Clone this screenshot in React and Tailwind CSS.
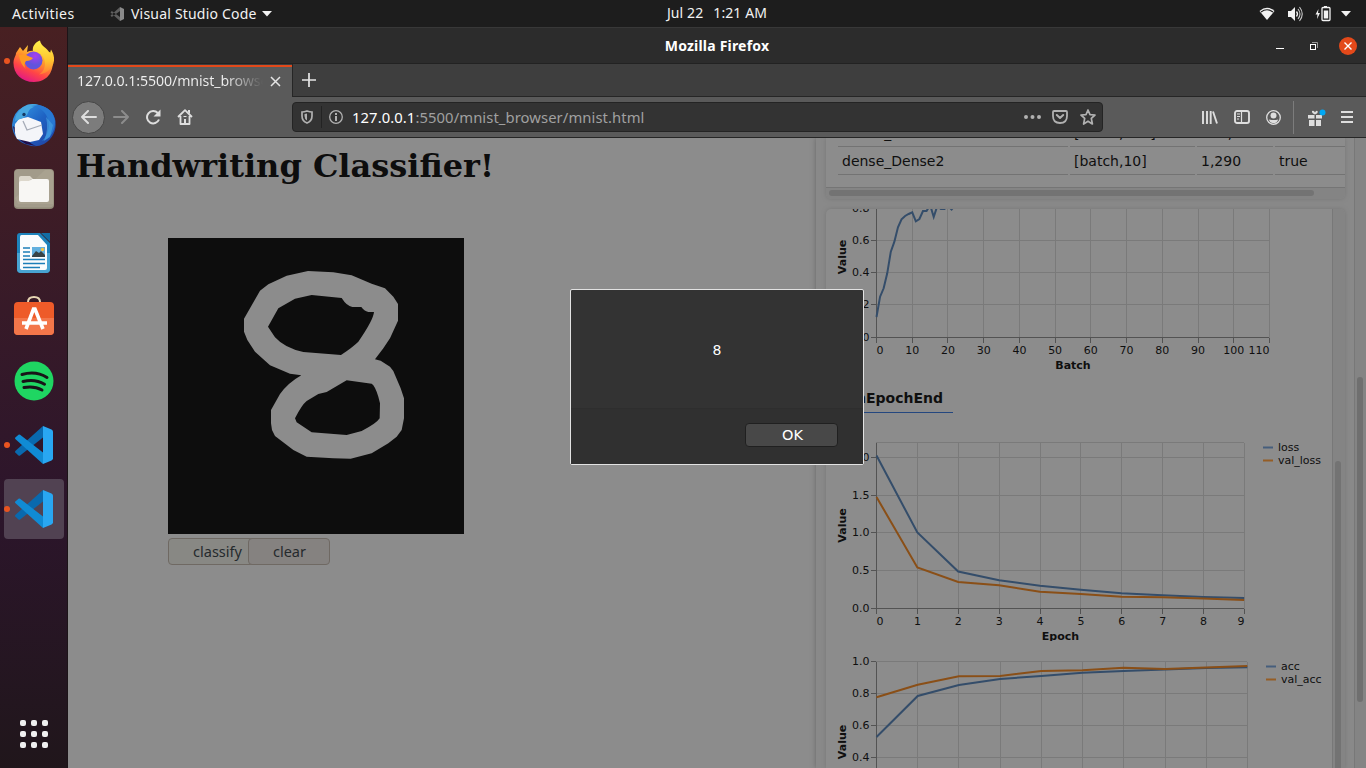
import React from "react";

const UI = "font-['Noto_Sans',sans-serif]";
const DJ = "font-['DejaVu_Sans',sans-serif]";

function TopBar() {
  return (
    <header className={`${UI} h-[27px] shrink-0 bg-[#1d1d1d] text-[#f2f2f2] text-[14px] leading-[27px] grid grid-cols-3`}>
      <div className="flex items-center">
        <span className="pl-3 w-[109px] tracking-[0.42px]">Activities</span>
        <svg width="16" height="16" viewBox="0 0 16 16" className="mr-[6px]">
          <path d="M11 1v14L15 13V3z" fill="#8a8a8a" />
          <path d="M11 1L1.500 9.500 2.800 11 11 5zM11 15L1.500 6.500 2.800 5 11 11z" fill="#5e5e5e" />
        </svg>
        <span className="tracking-[0.2px]">Visual Studio Code</span>
        <svg width="10" height="6" viewBox="0 0 10 6" className="ml-[5px]"><path d="M0 0h10L5 5.500z" fill="#f2f2f2" /></svg>
      </div>
      <div className="flex justify-center gap-[10px] pl-[68px] whitespace-nowrap tracking-[0.1px] leading-[26px]">
        <span>Jul 22</span><span>1:21 AM</span>
      </div>
      <div className="flex items-center justify-end pr-[15px]">
        <svg width="16" height="14" viewBox="0 0 16 14" className="mr-[12px]">
          <path d="M.5 4Q8-2.500 15.500 4L8 13z" fill="#f2f2f2" />
          <path d="M2 5Q8 .6 14 5" fill="none" stroke="#1d1d1d" strokeWidth="1.100" />
        </svg>
        <svg width="17" height="16" viewBox="0 0 17 16" className="mr-[11px]">
          <path d="M1 5h3l4-4v14l-4-4H1z" fill="#f2f2f2" />
          <path d="M9.500 5.500q2 2.500 0 5" fill="none" stroke="#f2f2f2" strokeWidth="1.300" />
          <path d="M11 3q4 5 0 10M12.500 1q5.500 7 0 14" fill="none" stroke="#c8c8c8" strokeWidth="1.100" />
        </svg>
        <svg width="16" height="17" viewBox="0 0 16 17" className="mr-[10px]">
          <path d="M3.500 4L.5 9.500h2L2 14l3-6H3z" fill="#f2f2f2" />
          <path d="M9 1h3v1H9z" fill="#f2f2f2" />
          <rect x="7" y="2.500" width="8" height="13" rx="1" fill="none" stroke="#f2f2f2" strokeWidth="1.300" />
          <path d="M8.800 5.500h4.400V13.500H8.800z" fill="#f2f2f2" />
        </svg>
        <svg width="10" height="6" viewBox="0 0 10 6"><path d="M0 0h10L5 5.500z" fill="#f2f2f2" /></svg>
      </div>
    </header>
  );
}

function FirefoxIcon() {
  return (
    <svg width="42" height="42" viewBox="0 0 42 42">
      <defs>
        <linearGradient id="ff1" x1=".8" y1="0" x2=".3" y2="1">
          <stop offset="0" stopColor="#fff04a" /><stop offset=".4" stopColor="#ff9a2b" /><stop offset=".7" stopColor="#ff4646" /><stop offset="1" stopColor="#e0158a" />
        </linearGradient>
        <linearGradient id="ff2" x1="0" y1="0" x2="0" y2="1"><stop offset="0" stopColor="#fff14a" /><stop offset=".6" stopColor="#ffc22f" /><stop offset="1" stopColor="#ff7a35" /></linearGradient>
        <radialGradient id="ff3" cx=".6" cy=".25"><stop offset="0" stopColor="#a93ef0" /><stop offset="1" stopColor="#6254dc" /></radialGradient>
      </defs>
      <path d="M3 13L7 7l3 4 5-6-1 7q4-2 8-1C29 10 33 14 37 12c6 10 3 30-16 30C8 42 0 33 .5 22 1 17 3 16 3 13z" fill="url(#ff1)" />
      <path d="M27 .5c-5 2-8 6-7 11 7 0 12 5 12 12 0 6-3 9-6 11 9-1 16-8 15-17-.5-4-2-6-3-8l-1 4c-3-6-9-7-10-13z" fill="url(#ff2)" />
      <circle cx="20.500" cy="20.500" r="9" fill="url(#ff3)" />
      <path d="M6 15q7-1 9 1l5 2q-2 3-7 3-3 4 0 8-6-5-7-14z" fill="#ff9a22" />
    </svg>
  );
}

function ThunderbirdIcon() {
  return (
    <svg width="46" height="46" viewBox="0 0 46 46">
      <defs><linearGradient id="tb" x1="0" y1="0" x2="1" y2="1"><stop offset="0" stopColor="#38a0e8" /><stop offset=".5" stopColor="#1f63c4" /><stop offset="1" stopColor="#203e9e" /></linearGradient></defs>
      <path d="M12 5Q19 0 28 3 42 6 44.500 19 46 34 33 42q-8 4-16 1Q2 39 1 23 2 10 12 5z" fill="url(#tb)" />
      <path d="M2 24q2 13 13 18l10 2q-8-3-11-10z" fill="#20104c" />
      <path d="M8 17L17 15l13 5 2 12-4 6-9 2-13-3Q3 32 4 22z" fill="#f4f5f9" />
      <path d="M12 19l4 9 15-5" fill="none" stroke="#a5abb7" strokeWidth="1.300" />
      <path d="M12 5Q19 0 28 3 18 5 16 13l-4 3-8 3q0-8 8-14z" fill="#48a8e0" />
      <path d="M20 4q17 2 18 20-1 9-7 15 13-4 13-20Q42 6 28 3z" fill="#2878d2" />
      <path d="M35 15l7 8-3 12-6 4q5-12 2-24z" fill="#49a7e4" opacity=".6" />
      <circle cx="13" cy="12.500" r="1.700" fill="#163963" />
    </svg>
  );
}

function FilesIcon() {
  return (
    <svg width="42" height="42" viewBox="0 0 42 42">
      <rect x="1" y="1" width="40" height="40" rx="4" fill="#918a78" /><rect x="1.500" y="1.500" width="39" height="38" rx="4" fill="#a29b8a" />
      <path d="M2 30L32 2h6q2 1 2 4v30H5z" fill="#aea795" opacity=".6" />
      <path d="M6 10q0-2 2-2h9l3 3h-2l-2 4H6z" fill="#ddd8cc" />
      <path d="M6 15q0-2 2-2h8l3-2h15q2 0 2 2v19q0 2-2 2H8q-2 0-2-2z" fill="#f8f7f4" />
    </svg>
  );
}

function WriterIcon() {
  return (
    <svg width="36" height="42" viewBox="0 0 36 42">
      <path d="M4 1h20l10 10v26q0 4-4 4H5q-4 0-4-4V4q0-3 3-3z" fill="#1d83bc" />
      <path d="M1 21h33v16q0 4-4 4H5q-4 0-4-4z" fill="#48a4d2" />
      <path d="M5.500 3H22l9 10v23q0 2-2 2H7q-3 0-3-2V5q0-2 1.500-2z" fill="#fafcfd" />
      <path d="M25 1h9v9z" fill="#126da4" />
      <path d="M7 16h7M7 20h7M7 24h7M7 27.500h22M7 31.500h22M7 35.500h17" stroke="#1c7eb8" strokeWidth="1.700" />
      <path d="M16 15h13v10H16z" fill="#62b0df" /><path d="M16 24l4-5 3 2 2-2 4 4v2H16z" fill="#374346" /><circle cx="26.500" cy="17.500" r="1.700" fill="#f7c443" />
    </svg>
  );
}

function SoftwareIcon() {
  return (
    <svg width="42" height="42" viewBox="0 0 42 42" className="-mt-[3px]">
      <path d="M15 9V7q0-5 6-5t6 5v2" fill="none" stroke="#e7d5b3" strokeWidth="2" />
      <rect x="1" y="7" width="40" height="33" rx="4" fill="#ee5b29" /><path d="M1 23h40v13q0 4-4 4H5q-4 0-4-4z" fill="#f3764a" />
      <path d="M13 34L20.500 14h1.500l8 20M9 28h25" fill="none" stroke="#fff" strokeWidth="3.600" />
    </svg>
  );
}

function SpotifyIcon() {
  return (
    <svg width="40" height="40" viewBox="0 0 40 40">
      <circle cx="20" cy="20" r="19.500" fill="#1fd662" />
      <path d="M8 13.500q14-4 25 3M9 20.500q12-3 21.500 2.700M10 26.500q10-2 18 2.500" fill="none" stroke="#191418" strokeLinecap="round" strokeWidth="3" />
    </svg>
  );
}

function CodeIcon() {
  return (
    <svg width="40" height="40" viewBox="0 0 40 40">
      <path d="M29 1L1.300 26q-.6.800 0 1.500L4.500 30.500q.8.500 1.600 0L29 12.500z" fill="#0969ae" />
      <path d="M1.300 12.500L4.500 9.800q.8-.5 1.600 0L29 27.500V39L1.300 14q-.6-.8 0-1.500z" fill="#108bd4" />
      <path d="M29 1l8.500 3.500q1.500.8 1.500 2v27q0 1.200-1.500 2L29 39z" fill="#29a7f2" />
    </svg>
  );
}

const DOCK = [
  { icon: <FirefoxIcon />, dot: true },
  { icon: <ThunderbirdIcon /> },
  { icon: <FilesIcon /> },
  { icon: <WriterIcon /> },
  { icon: <SoftwareIcon /> },
  { icon: <SpotifyIcon /> },
  { icon: <CodeIcon />, dot: true },
  { icon: <CodeIcon />, dot: true, active: true },
];

function Dock() {
  return (
    <nav className="w-[68px] shrink-0 flex flex-col pt-[2px] border-r border-[#1c1418] bg-linear-to-b from-[#482022] via-[#2c152b] via-65% to-[#20161b]">
      {DOCK.map((d, i) => (
        <div key={i} className="h-16 px-1 py-[2px]">
          <div className={`relative w-[60px] h-[60px] rounded-[4px] flex items-center justify-center ${d.active ? "bg-[#514252]" : ""}`}>
            {d.icon}
            {d.dot && <i className="absolute left-0 top-[27px] w-[6px] h-[6px] rounded-full bg-[#e95420]" />}
          </div>
        </div>
      ))}
      <div className="mt-auto mb-[20px] ml-[20px] grid grid-cols-3 gap-[5px] w-[28px]">
        {Array.from({ length: 9 }, (_, i) => <i key={i} className="w-[6px] h-[6px] rounded-[2px] bg-[#f0f0f0]" />)}
      </div>
    </nav>
  );
}

function TitleBar() {
  return (
    <div className="h-[37px] shrink-0 bg-[#2c2c2c] border-t border-t-[#383838] border-b border-b-[#222] flex items-center">
      <div className="w-[200px]" />
      <div className={`${UI} grow text-center text-white font-bold text-[14px] tracking-[0.2px] pb-[1px]`}>Mozilla Firefox</div>
      <div className="w-[200px] flex items-center justify-end pr-[9px]">
        <svg width="8" height="12" className="mr-[26px]"><path d="M0 8.500h8" stroke="#fff" /></svg>
        <svg width="8" height="8" viewBox="0 0 8 8" className="mr-[21px]"><path d="M2 .5h5.500V6" stroke="#999" fill="none" /><rect x=".5" y="2.500" width="5" height="5" fill="none" stroke="#fff" /></svg>
        <svg width="18" height="18" viewBox="0 0 18 18"><circle cx="9" cy="9" r="9" fill="#e3491a" /><path d="M5.500 5.500l7 7m0-7l-7 7" stroke="#fff" strokeWidth="1.400" /></svg>
      </div>
    </div>
  );
}

function TabBar() {
  return (
    <div className="h-[33px] shrink-0 bg-[#3e3e3e] flex">
      <div className={`${UI} w-[224px] bg-[#5a5a5a] border-t-2 border-t-[#e3491a] mt-[1px] pl-[9px] pb-[1px] flex items-center`}>
        <div className="w-[186px] overflow-hidden whitespace-nowrap text-[14.200px] tracking-[-0.1px] pb-[1px] bg-linear-to-r from-[#f0f0f0] from-80% to-[#5a5a5a] bg-clip-text text-transparent">127.0.0.1:5500/mnist_browser</div>
        <svg width="11" height="11" viewBox="0 0 11 11" className="ml-[7px]"><path d="M1 1l9 9m0-9l-9 9" stroke="#e4e4e4" strokeWidth="1.500" /></svg>
      </div>
      <div className="grow border-l border-b border-[#262626] flex items-center">
        <svg width="14" height="14" viewBox="0 0 14 14" className="ml-[9px]"><path d="M7 0v14M0 7h14" stroke="#e6e6e6" strokeWidth="1.700" /></svg>
      </div>
    </div>
  );
}

function Toolbar() {
  const s = { fill: "none", stroke: "#dedede", strokeWidth: 2 };
  const g = { fill: "none", stroke: "#b1b1b1" };
  return (
    <div className="h-[41px] shrink-0 bg-[#5a5a5a] border-b border-[#262626] flex items-center pl-[4px] pr-[12px]">
      <div className="w-[33px] h-[33px] rounded-full bg-[#7c7c7c] border border-[#464646] flex items-center justify-center">
        <svg width="16" height="14" viewBox="0 0 16 14"><path {...s} strokeLinejoin="round" strokeLinecap="round" d="M7 1L1 7l6 6M1 7h14" /></svg>
      </div>
      <svg width="16" height="14" viewBox="0 0 16 14" className="ml-[8px]"><path d="M9 1l6 6-6 6M15 7H1" fill="none" stroke="#8c8c8c" strokeWidth="2" strokeLinecap="round" strokeLinejoin="round" /></svg>
      <svg width="16" height="16" viewBox="0 0 16 16" className="ml-[16px]"><path {...s} d="M12.800 4A6.200 6.200 0 1 0 14 10.500" /><path d="M15.500.5v7h-7z" fill="#dedede" /></svg>
      <svg width="16" height="16" viewBox="0 0 16 16" className="ml-[16px]"><path {...s} strokeWidth="1.800" strokeLinejoin="round" d="M1 8l7-6.800L15 8M3.500 7v8h9V7" /><path d="M7 15V10h2v5M11 1h2v4l-2-2zM6.500 7h3v1h-3z" fill="#dedede" /></svg>

      <div className="ml-[99px] w-[811px] h-[30px] rounded-[4px] bg-[#333] border border-[#242424] flex items-center shrink-0">
        <svg width="14" height="14" viewBox="0 0 14 14" className="ml-[7px]"><path {...g} strokeWidth="1.700" d="M7 1q3 1 5 1v4q0 5-5 7-5-2-5-7V2q2 0 5-1z" /><path d="M7 3.500v7Q4.500 9 4.500 6V4z" fill="#b1b1b1" /></svg>
        <i className="w-px h-[22px] bg-[#232323] ml-[7px]" />
        <svg width="14" height="14" viewBox="0 0 14 14" className="ml-[7px]"><circle cx="7" cy="7" r="6.300" {...g} strokeWidth="1.300" /><path d="M6 3h2v2H6zM6 6h2v5H6z" fill="#b1b1b1" /></svg>
        <span className={`${UI} ml-[9px] pt-[1px] text-[14.800px] text-[#a0a0a0] tracking-[0.08px]`}><span className="text-white">127.0.0.1</span>:5500/mnist_browser/mnist.html</span>
        <svg width="17" height="4" viewBox="0 0 17 4" className="ml-auto"><path fill="#b1b1b1" d="M2 0a2 2 0 1 1 0 4 2 2 0 0 1 0-4M8.500 0a2 2 0 1 1 0 4 2 2 0 0 1 0-4M15 0a2 2 0 1 1 0 4 2 2 0 0 1 0-4" /></svg>
        <svg width="16" height="14" viewBox="0 0 16 14" className="ml-[11px]"><path {...g} strokeWidth="1.800" d="M2 1h12q1 0 1 1v4q0 7-7 7T1 6V2q0-1 1-1z" /><path {...g} strokeWidth="2" strokeLinecap="round" strokeLinejoin="round" d="M4.800 5L8 8l3.200-3" /></svg>
        <svg width="16" height="16" viewBox="0 0 16 16" className="ml-[12px] mr-[6px]"><path {...g} strokeWidth="1.700" strokeLinejoin="round" d="M8 1l2 4.600 5 .4-3.700 3.400L12.400 15 8 12.200 3.600 15l1.100-5.600L1 6l5-.4z" /></svg>
      </div>

      <svg width="16" height="14" viewBox="0 0 16 14" className="ml-auto"><path {...s} d="M1 1v13M5 1V14M8.700 1v13" strokeWidth="1.900" /><path {...s} d="M11 1.500l4 12" strokeWidth="1.900" /></svg>
      <svg width="16" height="14" viewBox="0 0 16 14" className="ml-[16px]"><rect x="1" y="1" width="14" height="12" rx="2" {...s} strokeWidth="1.900" /><path {...s} strokeWidth="1.200" d="M7.500 1v12M3 4h3M3 6.500h3M3 9h2" /></svg>
      <svg width="15" height="15" viewBox="0 0 15 15" className="ml-[16px]"><circle cx="7.500" cy="7.500" r="6.800" {...s} strokeWidth="1.300" /><circle cx="7.500" cy="5.600" r="3" fill="#dedede" /><path d="M2.800 9.500q4.700 1 9.400 0-1 3.700-4.700 3.700T2.800 9.500z" fill="#dedede" /></svg>
      <i className="w-px h-[33px] bg-[#7c7c7c] ml-[12px]" />
      <svg width="20" height="17" viewBox="0 0 20 17" className="ml-[13px]"><path d="M1 6h6.500v3.500H1zM9 6h6v3.500H9zM2 11h5.500v6H2zM9 11h5v6H9zM5 2q2-1 3 1.500Q9 1 10.500 2q1 2-2.500 3.500Q4.500 4 5 2z" fill="#dedede" /><circle cx="15.500" cy="3.500" r="3" fill="#00a8f4" /></svg>
      <svg width="12" height="12" viewBox="0 0 12 12" className="ml-[14px] mr-[1px]"><path {...s} d="M0 1h12M0 6h12M0 11h12" /></svg>
    </div>
  );
}

function Chart({ box, x0, x1, xTicks, yTop, yTicks, y0, axisTitle, axisX, valueY, lines, legend, titleY }) {
  const step = (x1 - x0) / (xTicks.length - 1);
  const last = xTicks.length - 1;
  const bottom = box[1] + box[3];
  return (
    <svg width={box[2]} height={box[3]} viewBox={box.join(" ")} className={`${DJ} block text-[11px] shrink-0`}>
      <g stroke="#7a7a7a" fill="none" shapeRendering="crispEdges">
        {xTicks.map((_, i) => <path key={i} d={`M${Math.round(x0 + i * step) + 0.5} ${yTop}V${y0}`} />)}
        {yTicks.map(([t, y]) => <path key={t} d={`M${x0} ${y}H${x1}`} />)}
        <path d={`M${x0} ${yTop}H${x1}`} />
      </g>
      <g stroke="#535353" fill="none" shapeRendering="crispEdges">
        <path d={`M${x0 + 0.5} ${yTop}V${y0 + 5}M${x0 - 5} ${y0}H${x1}`} />
        {xTicks.map((_, i) => <path key={i} d={`M${Math.round(x0 + i * step) + 0.5} ${y0}v5`} />)}
        {yTicks.map(([t, y]) => <path key={t} d={`M${x0 - 5} ${y}h5`} />)}
      </g>
      {lines.map(([c, pts, w]) => (
        <polyline key={c} fill="none" stroke={c} strokeWidth="2" points={pts.map((y, i) => `${x0 + 0.5 + i * w},${y}`).join(" ")} />
      ))}
      <g fill="#0f0f0f">
        {yTicks.map(([t, y]) => <text key={t} x={x0 - 6.5} y={y + 3.500} textAnchor="end">{t}</text>)}
        {y0 < bottom && xTicks.map((t, i) => <text key={t} x={i === 0 ? x0 + 0.5 : x0 + 0.5 + i * step} y={y0 + 16.500} textAnchor={i === 0 ? "start" : i === last ? "end" : "middle"}>{t}</text>)}
        {axisTitle && <text x={axisX} y={titleY} textAnchor="middle" fontWeight="bold">{axisTitle}</text>}
        <text transform={`translate(846 ${valueY}) rotate(-90)`} textAnchor="middle" fontWeight="bold">Value</text>
        {legend && legend.items.map((t, i) => (
          <g key={t}>
            <path d={`M${legend.x} ${legend.y + i * 13}h10`} stroke={i ? "#955d25" : "#465e7c"} strokeWidth="2" />
            <text x={legend.x + 15} y={legend.y + 3.500 + i * 13}>{t}</text>
          </g>
        ))}
      </g>
    </svg>
  );
}

const BLUE = "#344d6a";
const ORANGE = "#8a4f17";
const EPOCHS = ["0", "1", "2", "3", "4", "5", "6", "7", "8", "9"];

function TableRow({ cells }) {
  const w = ["w-[230px]", "w-[125px]", "w-[76px]", "w-[70px]"];
  return (
    <div className="flex gap-[2px] h-[28px] shrink-0">
      {cells.map((c, i) => (
        <div key={i} className={`${w[i]} shrink-0 pl-1 border-b border-[#737373] leading-[28px]`}>{c}</div>
      ))}
    </div>
  );
}

function Visor() {
  return (
    <div className="flex h-full shrink-0 shadow-[0_0_5px_#666]">
      <aside className={`${DJ} w-[538px] bg-[#898989] text-[#0f0f0f] pl-[10px] flex flex-col overflow-hidden`}>
        <div className="w-[519px] h-[61px] shrink-0 rounded-b-[5px] shadow-[0_0_4px_#777] overflow-hidden flex flex-col justify-end bg-[#8c8c8c]">
          <div className="pl-[12px] text-[14px] flex flex-col overflow-hidden justify-end h-[49px] pb-[12px]">
            <TableRow cells={["dense_Dense1", "[batch,128]", "102,528", "true"]} />
            <TableRow cells={["dense_Dense2", "[batch,10]", "1,290", "true"]} />
          </div>
          <div className="h-[12px] shrink-0 bg-[#848484] border-t border-[#757575] pl-[3px] pt-[2px]">
            <div className="w-[485px] h-[6px] rounded-full bg-[#737373]" />
          </div>
        </div>
        <div className="mt-[10px] grow w-[519px] rounded-t-[5px] shadow-[0_0_4px_#777] flex overflow-hidden bg-[#8c8c8c] min-h-0">
          <div className="w-[506px] flex flex-col overflow-hidden">
            <Chart box={[826, 209, 506, 165]} x0={876} x1={1269} y0={337.5} yTop={200} xTicks={["0", "10", "20", "30", "40", "50", "60", "70", "80", "90", "100", "110"]}
              yTicks={[["0.8", 208.5], ["0.6", 240.5], ["0.4", 272.8], ["0.2", 304.8], ["0.0", 337.5]]} axisTitle="Batch" axisX={1073} titleY={369} valueY={257}
              lines={[[BLUE, [317, 296.700, 288.300, 273.300, 251.700, 241.700, 227.300, 219.300, 216, 214, 212.300, 221.300, 219, 211, 211, 205, 217, 206, 209, 209, 206, 209.500, 205], 3.576]]} />
            <div className="h-[39px] shrink-0 pl-[12px] flex">
              <h3 className="w-[115px] border-b border-[#24477f] font-bold text-[14px] text-right pr-[10px] pt-[14px] leading-[20px]">onEpochEnd</h3>
            </div>
            <div className="h-[23px] shrink-0" />
            <Chart box={[826, 436, 506, 205]} x0={876} x1={1244} y0={608.5} yTop={442.5} xTicks={EPOCHS}
              yTicks={[["2.0", 457.5], ["1.5", 495.5], ["1.0", 532.8], ["0.5", 570.5], ["0.0", 608.5]]} axisTitle="Epoch" axisX={1060.500} titleY={640} valueY={525.500}
              lines={[[BLUE, [455.500, 532.500, 571.500, 580.300, 585.800, 589.700, 593.300, 595.200, 597, 598], 40.850], [ORANGE, [497, 567.500, 582, 585.300, 591.800, 594, 596.700, 597.300, 598.500, 600], 40.850]]}
              legend={{ x: 1263, y: 447.500, items: ["loss", "val_loss"] }} />
            <Chart box={[826, 641, 506, 127]} x0={876} x1={1247} y0={800} yTop={661.5} xTicks={EPOCHS}
              yTicks={[["1.0", 661.5], ["0.8", 693.5], ["0.6", 725.5], ["0.4", 757.8]]} valueY={742}
              lines={[[BLUE, [737, 696, 685, 679, 676, 672.700, 671, 669.500, 668, 667.300], 41.200], [ORANGE, [697.300, 684.700, 676.300, 676, 671, 670.300, 667.700, 669, 667.500, 666], 41.200]]}
              legend={{ x: 1266, y: 666.500, items: ["acc", "val_acc"] }} />
          </div>
          <div className="w-[13px] bg-[#848484] border-l border-[#787878] pl-[2px] flex flex-col justify-end">
            <div className="h-[307px] w-[6px] rounded-t-full bg-[#737373]" />
          </div>
        </div>
      </aside>
      <div className="w-[12px] bg-[#848484] border-l border-[#787878] pl-[2px] pt-[239px]">
        <div className="h-[325px] w-[6px] rounded-full bg-[#6f6f6f]" />
      </div>
    </div>
  );
}

function Page() {
  const btn = `${UI} h-[27px] rounded-[4px] border border-[#6f6963] text-[14.500px] text-[#252a2d] leading-[25px] pl-[1px]`;
  return (
    <main className="grow flex min-h-0 bg-[#8c8c8c] overflow-hidden">
      <div className="grow flex flex-col items-start">
        <h1 className="font-['DejaVu_Serif',serif] font-bold text-[32px] leading-[38px] mt-[9px] ml-[8px] text-[#0d0d0d] whitespace-nowrap">Handwriting Classifier!</h1>
        <svg width="296" height="296" viewBox="24 24 888 888" className="mt-[53px] ml-[100px]">
          <path d="M24 24h888v888H24z" fill="#0d0d0d" />
          <path fill="#8c8c8c" fillRule="evenodd" d="M444 123L520 127 575 136 635 161 675 175 700 200 714 222V272L690 325 670 355 645 388 662 392 690 410Q700 420 705 435L722 475 732 505V565L725 600 710 620 685 640 635 670 572 686 520 685 440 680 400 660 345 618 336 600 333 580V540L360 492Q385 458 424 436L390 431 330 406 285 365 262 330 252 305V266L300 182 325 163 380 137ZM455 195L545 204Q560 228 577 231L604 231Q612 243 625 246L642 246Q640 270 595 335 580 350 543 375L430 366Q375 355 345 322L324 290 355 235 405 206ZM560 451L635 461Q645 467 655 500L660 520 659 565Q650 580 605 603L560 615 455 607 410 577 405 565Q425 525 440 513L475 492 500 486Z" />
        </svg>
        <div className="flex ml-[100px] mt-[4px]">
          <button className={`${btn} w-[98px] bg-[#888884]`}>classify</button>
          <button className={`${btn} w-[82px] -ml-[18px] bg-[#858280]`}>clear</button>
        </div>
      </div>
      <Visor />
    </main>
  );
}

function AlertDialog() {
  return (
    <div className="absolute left-[570px] top-[289px] w-[294px] h-[176px] border border-[#e2e2e2] rounded-[2px] bg-[#333] text-white flex flex-col">
      <p className={`${DJ} text-[14px] text-center pt-[51px] leading-[18px] h-[118px]`}>8</p>
      <div className="grow bg-[#303030] border-t border-[#2e2e2e] flex justify-end pr-[25px] pt-[14px]">
        <button className={`${DJ} w-[93px] h-[24px] rounded-[4px] border border-[#202020] bg-[#484848] text-[14.500px] leading-[22px] pl-[2px]`}>OK</button>
      </div>
    </div>
  );
}

export default function App() {
  return (
    <div className="relative w-[1366px] h-[768px] overflow-hidden flex flex-col bg-[#1d1d1d]">
      <TopBar />
      <div className="flex grow min-h-0">
        <Dock />
        <section className="grow flex flex-col min-w-0">
          <TitleBar />
          <TabBar />
          <Toolbar />
          <Page />
        </section>
      </div>
      <AlertDialog />
    </div>
  );
}
